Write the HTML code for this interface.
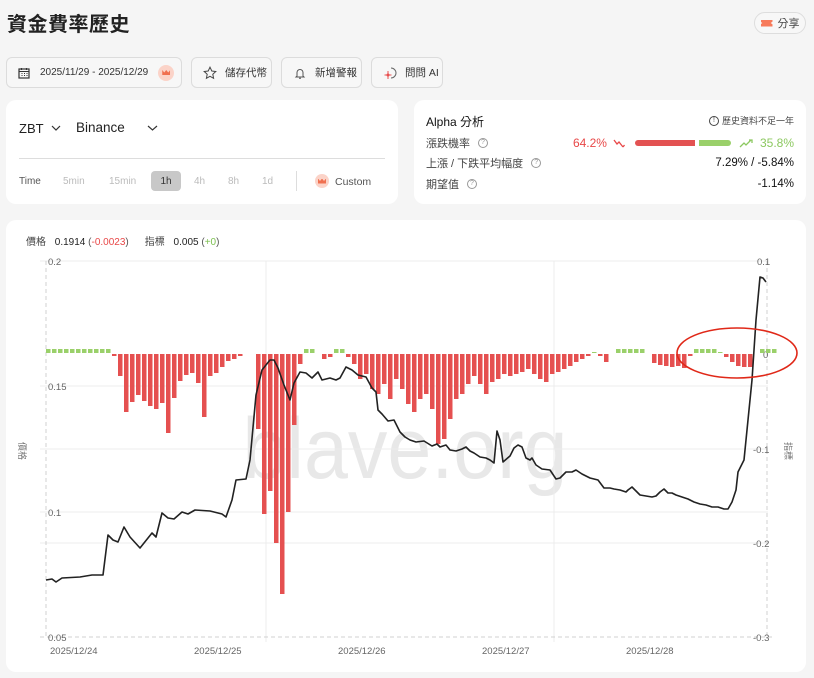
<!DOCTYPE html>
<html><head><meta charset="utf-8">
<style>
*{box-sizing:border-box;margin:0;padding:0}
body{width:814px;height:678px;background:#f5f5f5;font-family:"Liberation Sans","Noto Sans CJK TC",sans-serif;color:#222;position:relative;overflow:hidden}
.abs{position:absolute}
h1{position:absolute;left:7px;top:8px;font-size:20px;font-weight:bold;color:#222;letter-spacing:0.5px}
.share{left:754px;top:12px;width:52px;height:22px;border:1px solid #ddd;border-radius:11px;font-size:11px;color:#444;display:flex;align-items:center;justify-content:center;gap:5px;background:#f7f7f7}
.btn{top:57px;height:31px;border:1px solid #dcdcdc;border-radius:6px;font-size:10.5px;color:#333;display:flex;align-items:center;padding-left:11px;gap:8px;background:#f7f7f7;white-space:nowrap}
.card{background:#fff;border-radius:10px}
.crown{width:16px;height:16px;border-radius:8px;background:#fbd3c8;display:inline-flex;align-items:center;justify-content:center}
.crown i{width:8px;height:5px;background:#f07050;display:block;clip-path:polygon(0 0,25% 50%,50% 0,75% 50%,100% 0,100% 100%,0 100%)}
.q{display:inline-block;width:10px;height:10px;border:1px solid #999;border-radius:50%;font-size:7px;line-height:8px;text-align:center;color:#999;margin-left:8px;vertical-align:1px}
.row{position:absolute;left:12px;right:12px;font-size:11px;color:#444;display:flex;align-items:center}
</style></head><body>
<h1>資金費率歷史</h1>
<div class="abs share"><span style="width:12px;height:7px;background:#f77a5a;display:block;clip-path:polygon(0 0,100% 0,100% 30%,85% 50%,100% 70%,100% 100%,0 100%,0 70%,15% 50%,0 30%)"></span>分享</div>

<div class="abs btn" style="left:6px;width:176px"><svg width="12" height="12" viewBox="0 0 12 12"><rect x="1" y="2" width="10" height="9" fill="none" stroke="#333" stroke-width="1.2"/><path d="M1 4.5h10M3.5 6.5h1M6 6.5h1M8.5 6.5h1M3.5 8.5h1M6 8.5h1M8.5 8.5h1M3.5 1v2M8.5 1v2" stroke="#333" stroke-width="1.1"/></svg><span style="margin-left:2px;font-size:10px">2025/11/29 - 2025/12/29</span><span class="crown" style="margin-left:2px"><i></i></span></div>
<div class="abs btn" style="left:191px;width:81px"><svg width="14" height="14" viewBox="0 0 14 14"><path d="M7 1.2l1.8 3.8 4 .5-3 2.8.8 4-3.6-2-3.6 2 .8-4-3-2.8 4-.5z" fill="none" stroke="#444" stroke-width="1"/></svg>儲存代幣</div>
<div class="abs btn" style="left:281px;width:81px"><svg width="14" height="14" viewBox="0 0 14 14"><path d="M4 10V6.5a3 3 0 0 1 6 0V10l1 1H3zM6 12.3h2" fill="none" stroke="#555" stroke-width="1"/></svg>新增警報</div>
<div class="abs btn" style="left:371px;width:72px;gap:6px"><svg width="16" height="16" viewBox="0 0 16 16"><path d="M8 3a5 5 0 1 1 0 10" fill="none" stroke="#666" stroke-width="1"/><path d="M5 6v8M1.5 10h7" stroke="#e85050" stroke-width="1"/><circle cx="5" cy="10" r="1.5" fill="#e85050"/></svg>問問 AI</div>

<div class="abs card" style="left:6px;top:100px;width:392px;height:104px">
 <div class="abs" style="left:13px;top:21px;font-size:13px;color:#222">ZBT</div>
 <svg class="abs" style="left:45px;top:25px" width="10" height="7"><path d="M1 1l4 4 4-4" fill="none" stroke="#333" stroke-width="1.2"/></svg>
 <div class="abs" style="left:70px;top:20px;font-size:13.5px;color:#222">Binance</div>
 <svg class="abs" style="left:141px;top:25px" width="11" height="7"><path d="M1 1l4.5 4 4.5-4" fill="none" stroke="#333" stroke-width="1.2"/></svg>
 <div class="abs" style="left:13px;top:58px;width:366px;height:1px;background:#ddd"></div>
 <div class="abs" style="left:13px;top:76px;font-size:10px;color:#555">Time</div>
 <div class="abs" style="left:57px;top:76px;font-size:10px;color:#bbb">5min</div>
 <div class="abs" style="left:103px;top:76px;font-size:10px;color:#bbb">15min</div>
 <div class="abs" style="left:145px;top:71px;width:30px;height:20px;background:#c8c8c8;border-radius:4px;font-size:10px;color:#333;text-align:center;line-height:21px">1h</div>
 <div class="abs" style="left:188px;top:76px;font-size:10px;color:#bbb">4h</div>
 <div class="abs" style="left:222px;top:76px;font-size:10px;color:#bbb">8h</div>
 <div class="abs" style="left:256px;top:76px;font-size:10px;color:#bbb">1d</div>
 <div class="abs" style="left:290px;top:71px;width:1px;height:20px;background:#ddd"></div>
 <span class="abs crown" style="left:309px;top:74px;width:14px;height:14px"><i></i></span>
 <div class="abs" style="left:329px;top:76px;font-size:10.5px;color:#555">Custom</div>
</div>

<div class="abs card" style="left:414px;top:100px;width:392px;height:104px">
 <div class="abs" style="left:12px;top:13px;font-size:12px;color:#111">Alpha 分析</div>
 <div class="abs" style="right:12px;top:14px;font-size:9px;color:#444;display:flex;align-items:center;gap:3px"><span style="display:inline-block;width:10px;height:10px;border:1px solid #444;border-radius:50%;font-size:7px;line-height:8px;text-align:center">!</span>歷史資料不足一年</div>
 <div class="row" style="top:35px">漲跌機率<span class="q">?</span>
  <span style="margin-left:auto;color:#e84848;font-size:12px">64.2%</span>
  <svg width="16" height="12" style="margin-left:6px" viewBox="0 0 16 12"><path d="M1 3l3 4 2-2 4 5M10 10l1.5-2" fill="none" stroke="#e84848" stroke-width="1.3"/></svg>
  <span style="margin-left:6px;width:60px;height:6px;background:#e35252;border-radius:3px 0 0 3px"></span>
  <span style="margin-left:4px;width:32px;height:6px;background:#9ad06a;border-radius:0 3px 3px 0"></span>
  <svg width="16" height="12" style="margin-left:8px" viewBox="0 0 16 12"><path d="M1 10l4-4 2 2 5-5M10 3h3v3" fill="none" stroke="#8cc860" stroke-width="1.3"/></svg>
  <span style="margin-left:5px;color:#8cc860;font-size:12px">35.8%</span></div>
 <div class="row" style="top:55px">上漲 / 下跌平均幅度<span class="q">?</span><span style="margin-left:auto;color:#111;font-size:11.5px">7.29% / -5.84%</span></div>
 <div class="row" style="top:76px">期望值<span class="q">?</span><span style="margin-left:auto;color:#111;font-size:11.5px">-1.14%</span></div>
</div>

<div class="abs card" style="left:6px;top:220px;width:800px;height:452px"></div>
<div class="abs" style="left:26px;top:233px;font-size:10px;color:#444">價格 <span style="color:#222;margin-left:6px">0.1914</span> <span style="color:#555">(</span><span style="color:#e84848">-0.0023</span><span style="color:#555">)</span><span style="margin-left:16px">指標</span> <span style="color:#222;margin-left:6px">0.005</span> <span style="color:#555">(</span><span style="color:#7cc050">+0</span><span style="color:#555">)</span></div>

<svg class="abs" style="left:0;top:0" width="814" height="678">
 <text x="405" y="478" font-family="Liberation Sans" font-size="86" fill="#e8e8e8" text-anchor="middle" textLength="325" lengthAdjust="spacingAndGlyphs">blave.org</text>
 <g stroke="#ececec" stroke-width="1">
  <path d="M40 261H768M40 386H768M40 449H768M40 512H768M40 543H768"/>
  <path d="M266 261V642M554 261V642"/>
 </g>
 <path d="M40 637H772M46 261V637M767 261V637" stroke="#d0d0d0" stroke-dasharray="4 3"/>
 <g font-family="Liberation Sans" font-size="9.5" fill="#666">
  <text x="48" y="265">0.2</text><text x="48" y="390">0.15</text><text x="48" y="516">0.1</text><text x="48" y="641">0.05</text>
  <text x="757" y="265">0.1</text><text x="763" y="358">0</text><text x="753" y="453">-0.1</text><text x="753" y="547">-0.2</text><text x="753" y="641">-0.3</text>
  <text x="50" y="654">2025/12/24</text><text x="194" y="654">2025/12/25</text><text x="338" y="654">2025/12/26</text><text x="482" y="654">2025/12/27</text><text x="626" y="654">2025/12/28</text>
 </g>
 <g font-family="Liberation Sans,Noto Sans CJK TC,sans-serif" font-size="9" fill="#777">
  <text transform="translate(19,442) rotate(90)">價格</text>
  <text transform="translate(785,442) rotate(90)">指標</text>
 </g>
 <g id="bars"></g>
 <path fill="none" stroke="#222" stroke-width="1.6" stroke-linejoin="round" d="M46 580L52 579L56 582L62 578L80 577L92 575L103 575L108 535L113 540L118 542L124 527L130 537L140 548L148 538L152 533L156 537L162 513L168 518L174 519L182 512L188 514L195 510L210 511L222 514L226 517L232 500L236 480L246 479L250 460L256 395L262 370L270 360L274 360L278 368L284 385L290 400L294 383L300 372L306 373L312 378L318 372L322 380L330 378L336 380L340 378L346 367L352 370L358 375L366 377L372 388L376 392L378 410L382 414L388 421L394 420L400 432L405 437L410 440L416 442L424 441L432 446L437 444L440 447L446 445L450 450L456 451L462 449L466 447L470 451L474 453L480 457L486 458L490 460L494 463L497 431L500 440L503 462L510 456L514 448L518 445L522 447L526 458L530 460L532 458L536 465L542 469L550 470L556 479L560 478L566 472L572 472L576 470L582 474L590 478L598 480L604 488L610 488L614 489L620 490L626 492L628 490L632 487L636 491L640 495L646 496L652 497L656 496L660 492L664 489L668 493L672 493L676 495L682 497L688 499L694 502L700 504L706 505L712 507L718 507L724 509L728 509L732 502L736 490L738 472L741 466L744 460L748 420L752 380L756 320L760 277L763 278L766 282"/>
 <ellipse cx="737" cy="353" rx="60" ry="25" fill="none" stroke="#e02818" stroke-width="1.6"/>
</svg>
<script>
var v=[4,4,4,4,4,4,4,4,4,4,4,-2,-22,-58,-48,-41,-47,-52,-55,-49,-79,-44,-27,-21,-19,-29,-63,-22,-19,-13,-7,-5,-2,0,0,-75,-160,-137,-189,-240,-158,-71,-10,4,4,0,-5,-3,4,4,-3,-10,-25,-20,-35,-40,-30,-45,-25,-35,-50,-58,-45,-40,-55,-90,-85,-65,-45,-40,-30,-22,-30,-40,-28,-25,-20,-22,-20,-18,-15,-20,-25,-28,-20,-18,-15,-12,-8,-5,-2,1,-2,-8,0,4,4,4,4,4,0,-9,-11,-12,-13,-12,-14,-2,4,4,4,4,1,-3,-8,-12,-13,-13,0,4,4,4];
var z=353,ns='http://www.w3.org/2000/svg',g=document.getElementById('bars');
for(var i=0;i<v.length;i++){var x=46+6*i,h=v[i];if(!h)continue;var r=document.createElementNS(ns,'rect');r.setAttribute('x',x);r.setAttribute('width',4.5);
if(h>0){r.setAttribute('y',z-h);r.setAttribute('height',h);r.setAttribute('fill','#9ad06a');}else{r.setAttribute('y',z+1);r.setAttribute('height',-h);r.setAttribute('fill','#e55050');}g.appendChild(r);}
</script>
</body></html>
